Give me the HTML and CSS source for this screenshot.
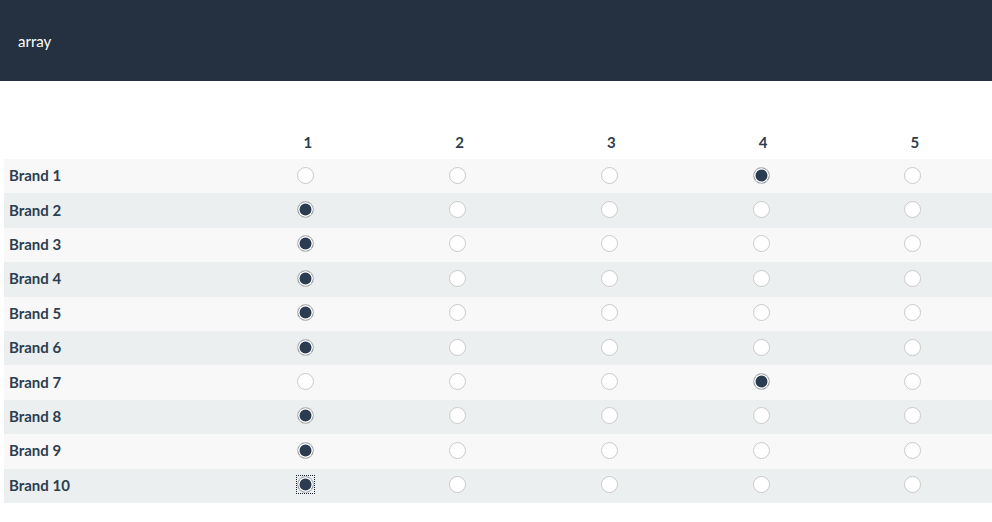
FILE: index.html
```html
<!DOCTYPE html>
<html>
<head>
<meta charset="utf-8">
<link rel="stylesheet" href="styles.css">
</head>
<body>
<header class="topbar"><span class="title">array</span></header>
<main class="survey">
  <div class="grid">
    <div class="row head">
      <div class="label"></div>
      <div class="cell">1</div><div class="cell">2</div><div class="cell">3</div><div class="cell">4</div><div class="cell">5</div>
    </div>
    <div class="row odd"><div class="label">Brand 1</div><div class="cell"><span class="radio"></span></div><div class="cell"><span class="radio"></span></div><div class="cell"><span class="radio"></span></div><div class="cell"><span class="radio on"></span></div><div class="cell"><span class="radio"></span></div></div>
    <div class="row even"><div class="label">Brand 2</div><div class="cell"><span class="radio on"></span></div><div class="cell"><span class="radio"></span></div><div class="cell"><span class="radio"></span></div><div class="cell"><span class="radio"></span></div><div class="cell"><span class="radio"></span></div></div>
    <div class="row odd"><div class="label">Brand 3</div><div class="cell"><span class="radio on"></span></div><div class="cell"><span class="radio"></span></div><div class="cell"><span class="radio"></span></div><div class="cell"><span class="radio"></span></div><div class="cell"><span class="radio"></span></div></div>
    <div class="row even"><div class="label">Brand 4</div><div class="cell"><span class="radio on"></span></div><div class="cell"><span class="radio"></span></div><div class="cell"><span class="radio"></span></div><div class="cell"><span class="radio"></span></div><div class="cell"><span class="radio"></span></div></div>
    <div class="row odd"><div class="label">Brand 5</div><div class="cell"><span class="radio on"></span></div><div class="cell"><span class="radio"></span></div><div class="cell"><span class="radio"></span></div><div class="cell"><span class="radio"></span></div><div class="cell"><span class="radio"></span></div></div>
    <div class="row even"><div class="label">Brand 6</div><div class="cell"><span class="radio on"></span></div><div class="cell"><span class="radio"></span></div><div class="cell"><span class="radio"></span></div><div class="cell"><span class="radio"></span></div><div class="cell"><span class="radio"></span></div></div>
    <div class="row odd"><div class="label">Brand 7</div><div class="cell"><span class="radio"></span></div><div class="cell"><span class="radio"></span></div><div class="cell"><span class="radio"></span></div><div class="cell"><span class="radio on"></span></div><div class="cell"><span class="radio"></span></div></div>
    <div class="row even"><div class="label">Brand 8</div><div class="cell"><span class="radio on"></span></div><div class="cell"><span class="radio"></span></div><div class="cell"><span class="radio"></span></div><div class="cell"><span class="radio"></span></div><div class="cell"><span class="radio"></span></div></div>
    <div class="row odd"><div class="label">Brand 9</div><div class="cell"><span class="radio on"></span></div><div class="cell"><span class="radio"></span></div><div class="cell"><span class="radio"></span></div><div class="cell"><span class="radio"></span></div><div class="cell"><span class="radio"></span></div></div>
    <div class="row even"><div class="label">Brand 10</div><div class="cell"><span class="focus-ring"><span class="radio on"></span></span></div><div class="cell"><span class="radio"></span></div><div class="cell"><span class="radio"></span></div><div class="cell"><span class="radio"></span></div><div class="cell"><span class="radio"></span></div></div>
  </div>
</main>
</body>
</html>
```
FILE: styles.css
```css
html, body { margin: 0; padding: 0; background: #fff; }
body { font-family: Lato, "Noto Sans", sans-serif; color: #2c3e50; }
.topbar {
  height: 81px;
  background: #253141;
  display: flex;
  align-items: center;
  padding-left: 18px;
}
.title { color: #fff; font-size: 15px; }
.survey { padding: 43px 0 0 4px; }
.grid { display: flex; flex-direction: column; }
.row {
  display: grid;
  grid-template-columns: 226px repeat(5, 151.75px);
  height: 34.4px;
  align-items: center;
}
.row.head { height: 35px; }
.row.odd { background: #f8f8f8; }
.row.even { background: #ebeff0; }
.label { font-weight: 700; font-size: 15px; padding: 0 0 2px 5px; }
.head .cell { font-weight: 700; font-size: 15px; padding: 0 0 0 4px; }
.cell { display: flex; justify-content: center; }
.radio {
  box-sizing: border-box;
  width: 17px; height: 17px;
  border-radius: 50%;
  border: 1px solid #c9c9c9;
  background: #fff;
  display: block;
  margin-bottom: 2px;
}
.radio.on {
  background: #2b3b50;
  box-shadow: inset 0 0 0 1.5px #fff;
}
.focus-ring { display: block; outline: 1px dotted #1d2533; margin-bottom: 2px; }
.focus-ring .radio { margin-bottom: 0; }
```
